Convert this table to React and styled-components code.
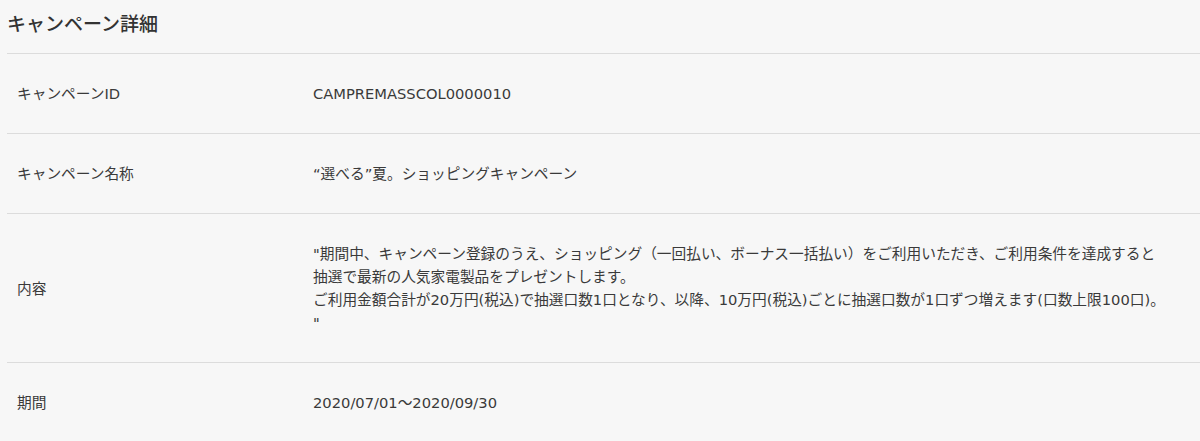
import React from "react";
import styled, { createGlobalStyle } from "styled-components";

const GlobalStyle = createGlobalStyle`
  body {
    margin: 0;
    background-color: #f7f7f7;
    font-family: "DejaVu Sans", "Noto Sans CJK JP", sans-serif;
    color: #333;
  }
`;

const Container = styled.div`
  padding: 0 0 0 7px;
`;

const Titulo = styled.h2`
  margin: 0;
  height: 53px;
  line-height: 45px;
  font-family: "Noto Sans CJK JP", sans-serif;
  font-size: 19px;
  font-weight: 500;
  color: #333;
`;

const Tabela = styled.table`
  width: 100%;
  border-collapse: collapse;
`;

const Linha = styled.tr`
  border-top: 1px solid #dcdcdc;
`;

const Celula = styled.td`
  padding: 28px 0 28px ${(props) => (props.$rotulo ? "10px" : "0")};
  width: ${(props) => (props.$rotulo ? "296px" : "auto")};
  font-size: 14.7px;
  line-height: 23px;
  vertical-align: middle;
  color: #3a3a3a;
  white-space: pre-line;
`;

const dados = [
  { rotulo: "キャンペーンID", valor: "CAMPREMASSCOL0000010" },
  { rotulo: "キャンペーン名称", valor: "“選べる”夏。ショッピングキャンペーン" },
  {
    rotulo: "内容",
    valor:
      "\"期間中、キャンペーン登録のうえ、ショッピング（一回払い、ボーナス一括払い）をご利用いただき、ご利用条件を達成すると\n抽選で最新の人気家電製品をプレゼントします。\nご利用金額合計が20万円(税込)で抽選口数1口となり、以降、10万円(税込)ごとに抽選口数が1口ずつ増えます(口数上限100口)。\n\"",
  },
  { rotulo: "期間", valor: "2020/07/01〜2020/09/30" },
];

const App = () => {
  return (
    <Container>
      <GlobalStyle />
      <Titulo>キャンペーン詳細</Titulo>
      <Tabela>
        <tbody>
          {dados.map((item) => (
            <Linha key={item.rotulo}>
              <Celula $rotulo>{item.rotulo}</Celula>
              <Celula>{item.valor}</Celula>
            </Linha>
          ))}
        </tbody>
      </Tabela>
    </Container>
  );
};

export default App;
